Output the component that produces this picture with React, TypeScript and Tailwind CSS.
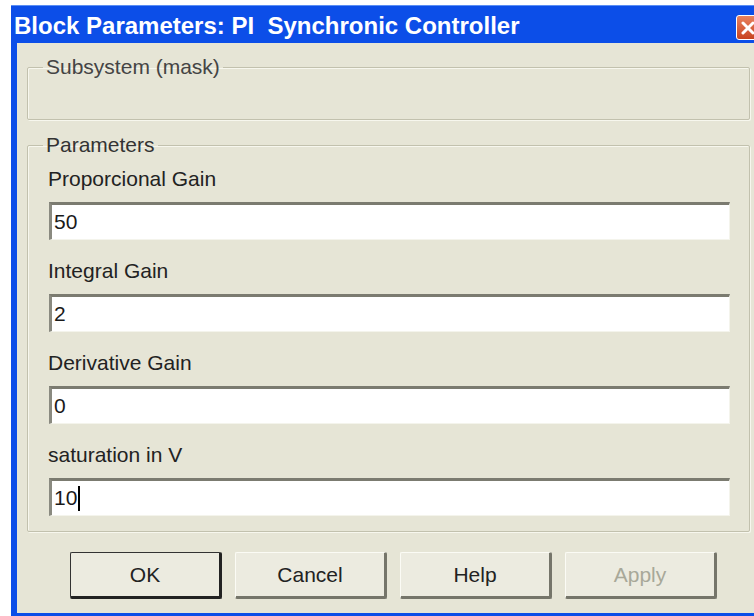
const fields = [
  { label: "Proporcional Gain", value: "50" },
  { label: "Integral Gain", value: "2" },
  { label: "Derivative Gain", value: "0" },
  { label: "saturation in V", value: "10", caret: true },
];

const buttons = [
  { text: "OK", isDefault: true },
  { text: "Cancel" },
  { text: "Help" },
  { text: "Apply", disabled: true },
];

// XP-style red close box in the caption bar
const CloseBox = () => (
  <div className="-mr-[6px] mt-[9px] flex h-[25px] w-[24px] shrink-0 items-center justify-center rounded-[3px] border border-white bg-gradient-to-b from-[#e8825e] to-[#c8421e]">
    <svg width="14" height="14" viewBox="0 0 14 14">
      <path d="M2 2 L12 12 M12 2 L2 12" stroke="white" strokeWidth="3" strokeLinecap="round" />
    </svg>
  </div>
);

const Field = ({ label, value, caret }: { label: string; value: string; caret?: boolean }) => (
  <div className="flex flex-col">
    <div className="h-[26px] pl-[20px] text-[21px] leading-[26px] text-[#222]">{label}</div>
    <div className="ml-[21px] mr-[19px] mt-[10px] flex h-[38px] items-center border-t-[3px] border-l-[3px] border-b border-r border-t-[#7b7b70] border-l-[#8a8a80] border-b-[#f4f4ec] border-r-[#f4f4ec] bg-white pl-[2px] text-[21px] text-[#1a1a1a]">
      {value}
      {caret && <span className="ml-[1px] inline-block h-[25px] w-[1.5px] bg-black" />}
    </div>
  </div>
);

export default function App() {
  return (
    <div
      className="h-[616px] w-[754px] overflow-hidden bg-white pl-[11px] pt-[5px]"
      style={{ fontFamily: '"Liberation Sans", Arial, sans-serif' }}
    >
      <div className="flex h-full flex-col bg-[#0c4ee8] pb-[3px]">
        {/* caption bar */}
        <div className="flex h-[38px] shrink-0 justify-between border-t border-t-[#5a8ef4] pl-[3px]">
          <span className="pt-[6px] text-[24px] font-bold leading-[28px] text-white">
            Block Parameters: PI&nbsp; Synchronic Controller
          </span>
          <CloseBox />
        </div>

        {/* dialog body */}
        <div className="ml-[6px] flex flex-1 flex-col bg-[#e6e5d6] pl-[10px] pr-[4px]">
          <fieldset className="mt-[13px] h-[64px] rounded-[2px] border border-[#c2c1ae] shadow-[inset_1px_1px_0_#f7f7ee,1px_1px_0_#f7f7ee]">
            <legend className="ml-[15px] px-[3px] text-[21px] leading-[22px] text-[#444]">Subsystem (mask)</legend>
          </fieldset>

          <fieldset className="mt-[14px] flex flex-col gap-[18px] rounded-[2px] border border-[#c2c1ae] pb-[15px] pt-[10px] shadow-[inset_1px_1px_0_#f7f7ee,1px_1px_0_#f7f7ee]">
            <legend className="ml-[15px] px-[3px] text-[21px] leading-[22px] text-[#333]">Parameters</legend>
            {fields.map((f) => (
              <Field key={f.label} {...f} />
            ))}
          </fieldset>

          <div className="mt-[20px] flex gap-[13px] pl-[43px]">
            {buttons.map((b) => (
              <div
                key={b.text}
                className={`flex h-[47px] w-[152px] items-center justify-center rounded-[2px] border-b-[3px] border-r-[3px] border-t border-l bg-[#ecebe0] text-[21px] ${
                  b.isDefault
                    ? "border-t-[#333] border-l-[#333] border-b-[#222] border-r-[#222] text-[#222]"
                    : "border-t-[#fbfbf5] border-l-[#fbfbf5] border-b-[#75756a] border-r-[#75756a] text-[#222]"
                } ${b.disabled ? "text-[#a8a899]" : ""}`}
              >
                {b.text}
              </div>
            ))}
          </div>
        </div>
      </div>
    </div>
  );
}
